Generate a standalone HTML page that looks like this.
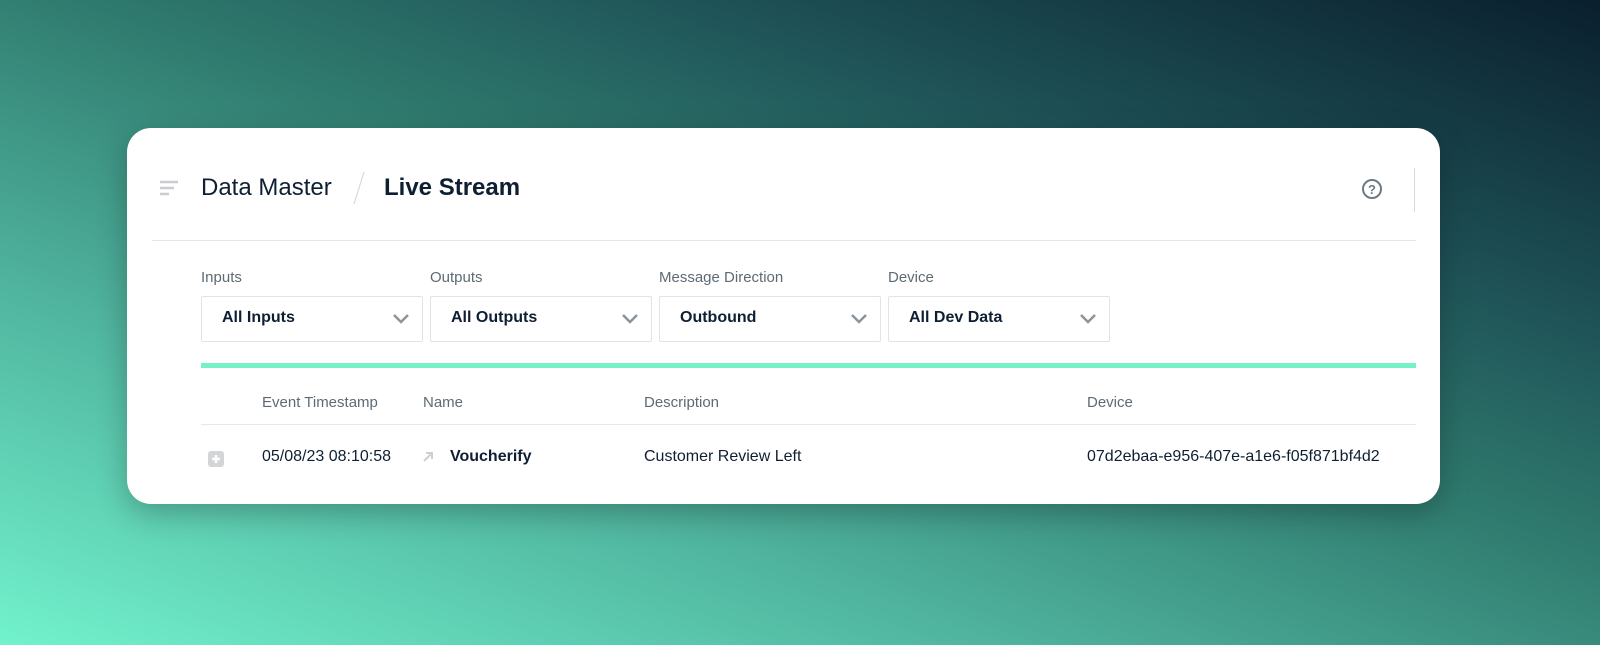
<!DOCTYPE html>
<html><head><style>
*{margin:0;padding:0;box-sizing:border-box}
body{width:1600px;height:645px;overflow:hidden;font-family:"Liberation Sans",sans-serif;background:linear-gradient(20deg,#72f2cd 0%,#4fb39d 30%,#2f7a6e 55%,#1d4f55 75%,#0a1f2d 100%);position:relative}
.card{position:absolute;left:127px;top:128px;width:1313px;height:376px;background:#fff;border-radius:24px;box-shadow:0 10px 30px rgba(0,0,0,.25)}
.abs{position:absolute}
.t{color:#0f1f33}
.lbl{font-size:15px;color:#5e6a73}
.sel{position:absolute;top:168px;width:222px;height:46px;border:1px solid #e1e4e6;border-radius:2px;font-size:16px;font-weight:bold;color:#0f1f33;padding:12px 0 0 20px}
.sel svg{position:absolute;right:12px;top:16px}
</style></head><body>
<div class="card">
 <svg class="abs" style="left:32px;top:52px" width="20" height="16"><g stroke="#c9cdd1" stroke-width="2.5"><line x1="1" y1="2" x2="19" y2="2"/><line x1="1" y1="8" x2="15" y2="8"/><line x1="1" y1="14" x2="10" y2="14"/></g></svg>
 <div class="abs t" style="left:74px;top:46px;font-size:24px">Data Master</div>
 <svg class="abs" style="left:224px;top:42px" width="16" height="36"><line x1="13" y1="2" x2="3" y2="34" stroke="#d0d4d7" stroke-width="1"/></svg>
 <div class="abs t" style="left:257px;top:46px;font-size:24px;font-weight:bold">Live Stream</div>
 <svg class="abs" style="left:1234px;top:50px" width="22" height="22"><circle cx="11" cy="11" r="9" fill="none" stroke="#6d7a84" stroke-width="2"/><text x="11" y="16" text-anchor="middle" font-size="13" font-weight="bold" fill="#6d7a84" font-family="Liberation Sans">?</text></svg>
 <div class="abs" style="left:1287px;top:40px;width:1px;height:44px;background:#d6d9dc"></div>
 <div class="abs" style="left:25px;top:112px;width:1264px;height:1px;background:#e3e6e8"></div>
 <div class="abs lbl" style="left:74px;top:141px">Inputs</div>
 <div class="abs lbl" style="left:303px;top:141px">Outputs</div>
 <div class="abs lbl" style="left:532px;top:141px">Message Direction</div>
 <div class="abs lbl" style="left:761px;top:141px">Device</div>
 <div class="sel" style="left:74px">All Inputs<svg width="18" height="12"><path d="M2 2l7 7 7-7" fill="none" stroke="#8a949b" stroke-width="2.5"/></svg></div>
 <div class="sel" style="left:303px">All Outputs<svg width="18" height="12"><path d="M2 2l7 7 7-7" fill="none" stroke="#8a949b" stroke-width="2.5"/></svg></div>
 <div class="sel" style="left:532px">Outbound<svg width="18" height="12"><path d="M2 2l7 7 7-7" fill="none" stroke="#8a949b" stroke-width="2.5"/></svg></div>
 <div class="sel" style="left:761px">All Dev Data<svg width="18" height="12"><path d="M2 2l7 7 7-7" fill="none" stroke="#8a949b" stroke-width="2.5"/></svg></div>
 <div class="abs" style="left:74px;top:235px;width:1215px;height:5px;background:#74f2c6"></div>
 <div class="abs lbl" style="left:135px;top:266px">Event Timestamp</div>
 <div class="abs lbl" style="left:296px;top:266px">Name</div>
 <div class="abs lbl" style="left:517px;top:266px">Description</div>
 <div class="abs lbl" style="left:960px;top:266px">Device</div>
 <div class="abs" style="left:74px;top:296px;width:1215px;height:1px;background:#e6e9eb"></div>
 <div class="abs" style="left:81px;top:323px;width:16px;height:16px;background:#d3d6d9;border-radius:3px"><svg width="16" height="16"><path d="M8 4v8M4 8h8" stroke="#fff" stroke-width="2.5"/></svg></div>
 <div class="abs t" style="left:135px;top:320px;font-size:16px">05/08/23 08:10:58</div>
 <svg class="abs" style="left:295px;top:323px" width="12" height="12"><path d="M2 10L10 2M4 2h6v6" fill="none" stroke="#cdd1d4" stroke-width="2"/></svg>
 <div class="abs t" style="left:323px;top:320px;font-size:16px;font-weight:bold">Voucherify</div>
 <div class="abs t" style="left:517px;top:320px;font-size:16px">Customer Review Left</div>
 <div class="abs t" style="left:960px;top:320px;font-size:16px">07d2ebaa-e956-407e-a1e6-f05f871bf4d2</div>
</div>
</body></html>
